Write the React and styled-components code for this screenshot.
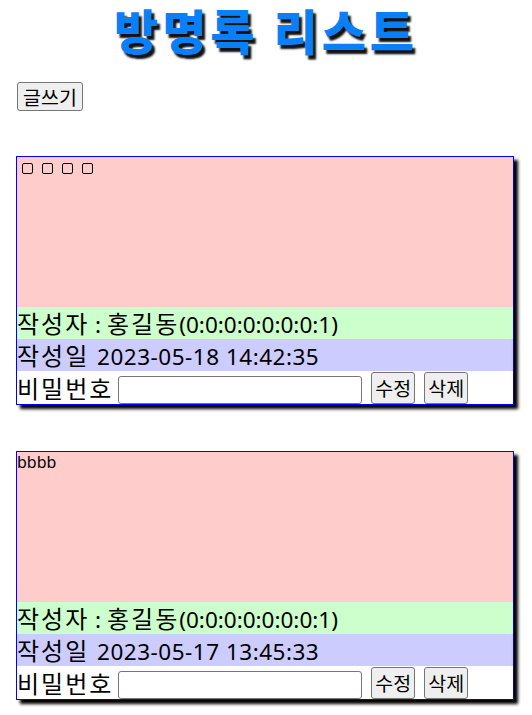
import React from "react";
import styled, { createGlobalStyle } from "styled-components";

const GlobalStyle = createGlobalStyle`
  html, body { margin: 0; padding: 0; background: #fff; }
  body { font-family: "Noto Sans", "Noto Sans CJK KR", sans-serif; color: #000; }
  * { box-sizing: border-box; }
`;

const Page = styled.div`
  padding: 0 8px 12px;
`;

const Title = styled.h1`
  margin: -6px 0 0;
  text-align: center;
  font-family: "Noto Sans CJK KR", sans-serif;
  font-size: 48px;
  font-weight: 900;
  line-height: 70px;
  color: #0a80f8;
  text-shadow: 3px 4px 2px #111;
  letter-spacing: 4px;
`;

const Toolbar = styled.div`
  margin-top: 18px;
  padding-left: 9px;
  display: flex;
`;

const Button = styled.button`
  font-family: "Noto Sans CJK KR", sans-serif;
  font-size: 19.5px;
  line-height: 24px;
  height: ${(p) => p.$h || 29}px;
  padding: 0 ${(p) => p.$px || 3}px;
  background: #efefef;
  color: #000;
  border: 1px solid #767676;
  border-radius: 3px;
`;

const List = styled.div`
  margin-top: 45px;
  padding-left: 8px;
  display: flex;
  flex-direction: column;
  gap: 46px;
`;

const Card = styled.div`
  width: 498px;
  border: 1px solid #0000ff;
  box-shadow: 4px 4px 3px #000;
  display: flex;
  flex-direction: column;
`;

const Content = styled.div`
  height: 150px;
  background: #ffcccc;
  font-size: 16px;
  line-height: 20px;
`;

const Tofus = styled.div`
  display: flex;
  gap: 9px;
  padding: 6px 0 0 5px;
`;

const Tofu = styled.span`
  width: 11px;
  height: 11px;
  border: 1px solid #000;
  border-radius: 2px;
`;

const TextRow = styled.div`
  height: 32px;
  background: ${(p) => p.$bg};
  font-size: 22.5px;
  line-height: 32px;
  white-space: nowrap;
`;

const FormRow = styled.div`
  height: 33px;
  background: #fff;
  font-size: 22.5px;
  line-height: 33px;
  display: flex;
  align-items: flex-end;
`;

const Ko = styled.span`
  font-family: "Noto Sans CJK KR", sans-serif;
  font-size: 24px;
  letter-spacing: 2px;
`;

const Stamp = styled.span`
  letter-spacing: 0.5px;
  margin-left: 2px;
`;

const Input = styled.input`
  width: 244px;
  height: 28px;
  border: 1px solid #767676;
  border-radius: 3px;
  margin: 0 9px 0 5px;
`;

const Actions = styled.div`
  display: flex;
  gap: 9px;
`;

const posts = [
  { id: 1, tofu: true, writer: "홍길동", ip: "(0:0:0:0:0:0:0:1)", date: "2023-05-18 14:42:35" },
  { id: 2, content: "bbbb", writer: "홍길동", ip: "(0:0:0:0:0:0:0:1)", date: "2023-05-17 13:45:33" },
];

export default function App() {
  return (
    <Page>
      <GlobalStyle />
      <Title>방명록 리스트</Title>
      <Toolbar>
        <Button $px={5}>글쓰기</Button>
      </Toolbar>
      <List>
        {posts.map((p) => (
          <Card key={p.id}>
            <Content>
              {p.tofu ? (
                <Tofus>
                  <Tofu />
                  <Tofu />
                  <Tofu />
                  <Tofu />
                </Tofus>
              ) : (
                p.content
              )}
            </Content>
            <TextRow $bg="#ccffcc">
              <Ko>작성자</Ko> : <Ko>{p.writer}</Ko>
              {p.ip}
            </TextRow>
            <TextRow $bg="#ccccff">
              <Ko>작성일</Ko> <Stamp>{p.date}</Stamp>
            </TextRow>
            <FormRow>
              <Ko>비밀번호</Ko>
              <Input type="password" />
              <Actions>
                <Button $h={32}>수정</Button>
                <Button $h={32}>삭제</Button>
              </Actions>
            </FormRow>
          </Card>
        ))}
      </List>
    </Page>
  );
}
